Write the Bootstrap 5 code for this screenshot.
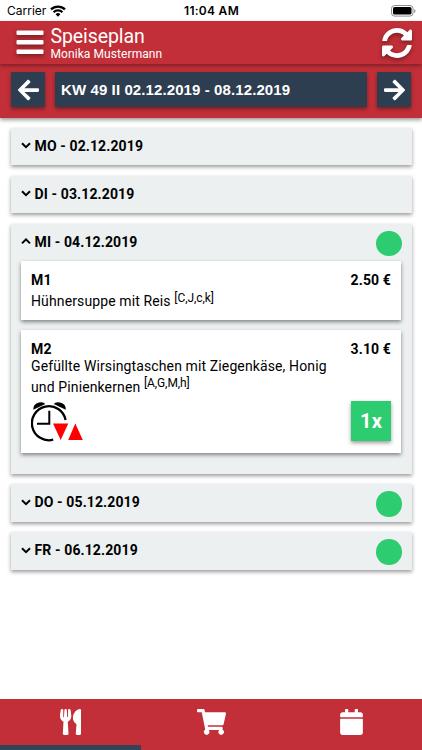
<!DOCTYPE html>
<html lang="de">
<head>
<meta charset="utf-8">
<meta name="viewport" content="width=device-width, initial-scale=1">
<title>Speiseplan</title>
<link rel="stylesheet" href="https://cdn.jsdelivr.net/npm/bootstrap@5.3.0/dist/css/bootstrap.min.css">
<style>
:root{--red:#c22f38;--navy:#2c3e50;--green:#2ecc71;--soft:#ecf0f1}
body{font-family:Roboto,sans-serif;font-size:14px;line-height:20px;color:#000;letter-spacing:.12px}
svg{display:block;flex:none}
.status{height:21px;font:12px/21px Inter,sans-serif;letter-spacing:0;padding:0 6px 0 7px}
.status .clock{font-weight:600;letter-spacing:.28px}
.topbar{height:43px;background:var(--red);color:#fff;padding:0 10px 0 16px;box-shadow:0 2px 4px rgba(0,0,0,.35);z-index:2}
.topbar h1{font-size:19.5px;line-height:21px;font-weight:400;letter-spacing:-.1px}
.topbar .names{padding:2px 0 0 6.500px}
.topbar .who{font-size:12px;line-height:14px;letter-spacing:.08px}
.glow{filter:drop-shadow(0 2px 2px rgba(0,0,0,.4))}
.weekbar{height:54px;background:var(--red);padding:8px 11px 0 11px;gap:10px;box-shadow:0 2px 4px rgba(0,0,0,.4)}
.tile{background:var(--navy);color:#fff;height:35px;box-shadow:0 2px 4px rgba(0,0,0,.4)}
.step{width:34px}
.week{font:bold 15px/36px "Liberation Sans",sans-serif;padding-left:6px;letter-spacing:.1px}
.days{padding:10px 10.5px;gap:10.8px}
.day{background:var(--soft);box-shadow:0 2px 4px rgba(0,0,0,.4)}
.day-head{height:37.2px;padding:0 10px 1.500px 10px;font-weight:700}
.dot{width:25.5px;height:25.5px;background:var(--green);margin-top:3px}
.meals{padding:0 10.5px 20.5px;gap:10px}
.meal{background:#fff;padding:9px 10px;box-shadow:0 2px 4px rgba(0,0,0,.45)}
.meal sup{font-size:12px;top:-.36em;line-height:0;letter-spacing:-.08px}
.first-meal{height:59px}
.first-meal .dish{padding-top:1px}
.second-meal{height:123px}
.second-meal .dish{line-height:21px;margin-top:-3.500px}
.icons{margin-top:3px}
.qty{width:40px;height:40px;background:var(--green);color:#fff;font-weight:700;font-size:20px;line-height:40px;box-shadow:0 2px 4px rgba(0,0,0,.4)}
.tabs{height:51px;background:var(--red)}
.tab{padding-top:10px;border-bottom:5.5px solid transparent}
.tab.on{border-color:#34435a}
</style>
<script src="https://cdn.jsdelivr.net/npm/bootstrap@5.3.0/dist/js/bootstrap.bundle.min.js"></script>
</head>
<body class="bg-white vh-100 d-flex flex-column overflow-hidden">
<div class="status d-flex align-items-center">
  <div class="col d-flex align-items-center gap-1"><span>Carrier</span>
    <svg width="16" height="12" viewBox="0 0 16 12" fill="none" stroke="#000" stroke-width="2.3"><path d="M1 4.4a10 10 0 0 1 14 0M3.6 7.2a6.2 6.2 0 0 1 8.8 0"/><path d="M8 11.7 5.6 9.2a3.4 3.4 0 0 1 4.8 0z" fill="#000" stroke="none"/></svg>
  </div>
  <span class="clock">11:04 AM</span>
  <div class="col d-flex justify-content-end">
    <svg width="25" height="12" viewBox="0 0 25 12"><rect x=".5" y=".5" width="21.5" height="10.6" rx="3" fill="none" stroke="#8d8d8d"/><rect x="2" y="2" width="18.5" height="7.6" rx="1.6"/><path d="M23.2 4v4q1.3-.6 1.3-2t-1.3-2z" fill="#8d8d8d"/></svg>
  </div>
</div>
<header class="topbar d-flex align-items-center position-relative">
  <svg class="glow" width="28" height="25" viewBox="0 0 28 25" fill="#fff"><rect x=".5" y=".5" width="27" height="4.6" rx="1"/><rect x=".5" y="10" width="27" height="4.6" rx="1"/><rect x=".5" y="19.5" width="27" height="4.6" rx="1"/></svg>
  <div class="names flex-grow-1"><h1 class="m-0">Speiseplan</h1><div class="who">Monika Mustermann</div></div>
  <svg class="glow" width="30" height="30" viewBox="8 8 496 496" fill="#fff"><path id="half" d="M32 296h134.059c21.382 0 32.09 25.851 16.971 40.971l-41.75 41.75c31.262 29.273 71.835 45.319 114.876 45.28 77.418-.07 144.315-53.144 162.787-126.849 1.344-5.363 6.122-9.15 11.651-9.15h57.304c7.498 0 13.194 6.807 11.807 14.176C478.067 417.076 377.187 504 256 504c-66.448 0-126.791-26.136-171.315-68.685L48.97 471.03C33.851 486.149 8 475.441 8 454.059V320c0-13.255 10.745-24 24-24z"/><use href="#half" transform="rotate(180 256 256)"/></svg>
</header>
<div class="weekbar d-flex">
  <div class="tile step d-flex align-items-center justify-content-center"><svg width="21" height="24" viewBox="0 0 448 512" fill="#fff"><path id="arrow" d="M257.5 445.1l-22.2 22.2c-9.4 9.4-24.6 9.4-33.9 0L7 273c-9.4-9.4-9.4-24.6 0-33.9L201.4 44.7c9.4-9.4 24.6-9.4 33.9 0l22.2 22.2c9.5 9.5 9.3 25-.4 34.3L136.6 216H424c13.3 0 24 10.7 24 24v32c0 13.3-10.7 24-24 24H136.6l120.5 114.8c9.8 9.3 10 24.8.4 34.3z"/></svg></div>
  <div class="tile week flex-grow-1">KW 49 II 02.12.2019 - 08.12.2019</div>
  <div class="tile step d-flex align-items-center justify-content-center"><svg width="21" height="24" viewBox="0 0 448 512" fill="#fff"><use href="#arrow" transform="rotate(180 224 256)"/></svg></div>
</div>
<main class="days d-flex flex-column flex-grow-1">
  <section class="day"><div class="day-head d-flex align-items-center"><svg class="me-1" width="10" height="7" viewBox="0 0 10 7" fill="none" stroke="#000" stroke-width="2"><path d="m1 1.2 4 4 4-4"/></svg><span>MO - 02.12.2019</span></div></section>
  <section class="day"><div class="day-head d-flex align-items-center"><svg class="me-1" width="10" height="7" viewBox="0 0 10 7" fill="none" stroke="#000" stroke-width="2"><path d="m1 1.2 4 4 4-4"/></svg><span>DI - 03.12.2019</span></div></section>
  <section class="day"><div class="day-head d-flex align-items-center"><svg class="me-1" width="10" height="7" viewBox="0 0 10 7" fill="none" stroke="#000" stroke-width="2"><path d="m1 5.4 4-4 4 4"/></svg><span>MI - 04.12.2019</span><i class="dot rounded-circle ms-auto"></i></div>
    <div class="meals d-flex flex-column">
      <article class="meal first-meal"><div class="d-flex justify-content-between fw-bold"><span>M1</span><span>2.50 €</span></div><div class="dish">Hühnersuppe mit Reis <sup>[C,J,c,k]</sup></div></article>
      <article class="meal second-meal"><div class="d-flex justify-content-between fw-bold"><span>M2</span><span>3.10 €</span></div><div class="dish">Gefüllte Wirsingtaschen mit Ziegenkäse, Honig<br>und Pinienkernen <sup>[A,G,M,h]</sup></div>
        <div class="icons d-flex justify-content-between">
          <svg width="52" height="42" viewBox="0 0 52 42"><g fill="none" stroke="#000"><path d="M22.2 38.7A17 17 0 1 1 34.6 19" stroke-width="2.3"/><path d="M18.3 9.7v13H6" stroke-width="2"/></g><path d="M2.3 8.8Q2 3 8 1.5q4.500-1 6.300 1.500zM34.800 8.800Q35.200 3 29 1.500q-4.500-1-6.300 1.500z"/><path d="M22 22.500h15.300l-7.600 16.500zM44.300 22.500l7.500 16.500H37.200z" fill="#f00"/></svg>
          <div class="qty text-center">1x</div>
        </div></article>
    </div>
  </section>
  <section class="day"><div class="day-head d-flex align-items-center"><svg class="me-1" width="10" height="7" viewBox="0 0 10 7" fill="none" stroke="#000" stroke-width="2"><path d="m1 1.2 4 4 4-4"/></svg><span>DO - 05.12.2019</span><i class="dot rounded-circle ms-auto"></i></div></section>
  <section class="day"><div class="day-head d-flex align-items-center"><svg class="me-1" width="10" height="7" viewBox="0 0 10 7" fill="none" stroke="#000" stroke-width="2"><path d="m1 1.2 4 4 4-4"/></svg><span>FR - 06.12.2019</span><i class="dot rounded-circle ms-auto"></i></div></section>
</main>
<nav class="tabs d-flex">
  <div class="tab on col d-flex justify-content-center"><svg width="21" height="26" viewBox="0 0 416 512" fill="#fff"><path d="M207.900 15.200c.8 4.700 16.100 94.500 16.100 128.800 0 52.300-27.800 89.600-68.900 104.600L168 486.700c.7 13.700-10.200 25.300-24 25.300H80c-13.700 0-24.700-11.500-24-25.300l12.900-238.100C27.700 233.600 0 196.200 0 144 0 109.600 15.300 19.900 16.100 15.200 19.300-5.100 61.400-5.400 64 16.300v141.200c1.300 3.400 15.100 3.200 16 0 1.400-25.300 7.900-139.200 8-141.800 3.300-20.800 44.700-20.800 47.900 0 .2 2.700 6.600 116.500 8 141.800.9 3.200 14.800 3.400 16 0V16.300c2.600-21.600 44.800-21.400 47.900-1.100zm119.200 285.700l-15 185.100c-1.200 14 9.900 26 23.900 26h56c13.300 0 24-10.700 24-24V24c0-13.200-10.700-24-24-24-82.500 0-221.400 178.500-64.900 300.900z"/></svg></div>
  <div class="tab col d-flex justify-content-center"><svg width="29" height="26" viewBox="0 0 576 512" fill="#fff"><path d="M528.120 301.319l47.273-208C578.806 78.301 567.391 64 551.990 64H159.208l-9.166-44.810C147.758 8.021 137.930 0 126.529 0H24C10.745 0 0 10.745 0 24v16c0 13.255 10.745 24 24 24h69.883l70.248 343.435C147.325 417.100 136 435.222 136 456c0 30.928 25.072 56 56 56s56-25.072 56-56c0-15.674-6.447-29.835-16.824-40h209.647C430.447 426.165 424 440.326 424 456c0 30.928 25.072 56 56 56s56-25.072 56-56c0-22.172-12.888-41.332-31.579-50.405l5.517-24.276c3.413-15.018-8.002-29.319-23.403-29.319H218.117l-6.545-32h293.145c11.206 0 20.920-7.754 23.403-18.681z"/></svg></div>
  <div class="tab col d-flex justify-content-center"><svg width="23" height="26" viewBox="0 0 448 512" fill="#fff"><path d="M12 192h424c6.600 0 12 5.400 12 12v260c0 26.500-21.500 48-48 48H48c-26.500 0-48-21.500-48-48V204c0-6.600 5.400-12 12-12zm436-44v-36c0-26.500-21.500-48-48-48h-48V12c0-6.600-5.400-12-12-12h-40c-6.600 0-12 5.400-12 12v52H160V12c0-6.600-5.400-12-12-12h-40c-6.600 0-12 5.400-12 12v52H48C21.500 64 0 85.500 0 112v36c0 6.600 5.400 12 12 12h424c6.600 0 12-5.400 12-12z"/></svg></div>
</nav>
</body>
</html>
